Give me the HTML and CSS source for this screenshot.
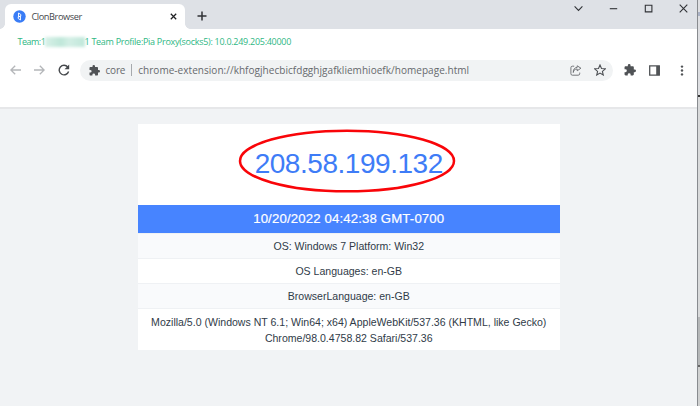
FILE: index.html
```html
<!DOCTYPE html>
<html lang="en">
<head>
<meta charset="utf-8">
<title>ClonBrowser</title>
<link rel="stylesheet" href="styles.css">
</head>
<body>
<div class="window">
  <header class="tabstrip">
    <div class="tab">
      <svg class="favicon" width="13" height="13" viewBox="0 0 13 13"><circle cx="6.5" cy="6.5" r="6.2" fill="#397cf6"/><path d="M5.5 3v3.800l2.300-.8M7.500 10V6.200l-2.300.8M5.500 3l2.300 1.500v1.700M7.500 10L5.200 8.500V6.800" fill="none" stroke="#fff" stroke-width=".9"/></svg>
      <span class="tab-title">ClonBrowser</span>
      <svg class="tab-close" width="7" height="7" viewBox="0 0 7 7"><path d="M.8.8l5.4 5.4M6.2.8L.8 6.2" stroke="#202124" stroke-width="1.25"/></svg>
    </div>
    <svg class="new-tab" width="10" height="10" viewBox="0 0 10 10"><path d="M5 .5v9M.5 5h9" stroke="#303236" stroke-width="1.5"/></svg>
    <div class="controls">
      <svg width="9" height="9" viewBox="0 0 9 9"><path d="M.6 2.4l3.9 4 3.9-4"/></svg>
      <svg width="9" height="9" viewBox="0 0 9 9"><path d="M.8 4.7h7.4"/></svg>
      <svg width="9" height="9" viewBox="0 0 9 9"><path d="M1.3 1.3h6.6v6.6H1.3z"/></svg>
      <svg width="9" height="9" viewBox="0 0 9 9"><path d="M.7.7l7.6 7.6M8.3.7L.7 8.3"/></svg>
    </div>
  </header>
  <div class="profile"><span class="p-team">Team:1</span><span class="redacted"></span><span class="p-info">1 Team Profile:Pia Proxy(socks5): 10.0.249.205:40000</span></div>
  <nav class="toolbar">
    <svg class="back" width="11" height="10" viewBox="0 0 11 10"><path d="M11 5H1M5.2.7L.9 5l4.3 4.3" fill="none" stroke="#b4b6b9" stroke-width="1.3"/></svg>
    <svg class="forward" width="11" height="10" viewBox="0 0 11 10"><path d="M0 5h10M5.8.7L10.1 5 5.8 9.3" fill="none" stroke="#b4b6b9" stroke-width="1.3"/></svg>
    <svg class="reload" width="12" height="12" viewBox="0 0 12 12"><path d="M9.8 3.1A4.8 4.8 0 1 0 10.6 7.5" fill="none" stroke="#45484c" stroke-width="1.4"/><path d="M11.2.6v4.7H6.5z" fill="#45484c"/></svg>
    <div class="omnibox">
      <svg class="puzzle" width="11" height="11" viewBox="1 1 22 22"><path d="M20.5 11H19V7c0-1.100-.9-2-2-2h-4V3.500a2.500 2.500 0 0 0-5 0V5H4c-1.100 0-2 .9-2 2v3.800h1.500a2.700 2.700 0 0 1 0 5.400H2V20c0 1.100.9 2 2 2h3.800v-1.500a2.700 2.700 0 0 1 5.400 0V22H17c1.100 0 2-.9 2-2v-4h1.500a2.500 2.500 0 0 0 0-5z" fill="#505356"/></svg>
      <span class="scheme">core</span>
      <span class="divider"></span>
      <span class="url">chrome-extension://khfogjhecbicfdgghjgafkliemhioefk/homepage.html</span>
      <svg class="share" width="12" height="11" viewBox="0 0 12 11"><path d="M4.200 1.200H2.300Q.900 1.200.900 2.700V8.700Q.900 10.200 2.300 10.200H8.200Q9.700 10.200 9.700 8.700V7.600M3.300 7.500C3.500 5.300 4.700 4 7.200 4V5.800L10.900 3.200 7.200.8V2.400C4.400 2.500 3.100 4.700 3.300 7.500z" fill="none" stroke="#66696d" stroke-width=".9" stroke-linejoin="round"/></svg>
      <svg class="star" width="12" height="12" viewBox="2 2 20 20"><path d="M12 3.600l2.500 5.900 6.400.5-4.900 4.200 1.500 6.200-5.500-3.300-5.500 3.300L8 14.200 3.100 10l6.400-.5z" fill="none" stroke="#4d5054" stroke-width="1.800"/></svg>
    </div>
    <svg class="extensions" width="12" height="12" viewBox="1 1 22 22"><path d="M20.500 11H19V7c0-1.100-.9-2-2-2h-4V3.500a2.500 2.500 0 0 0-5 0V5H4c-1.100 0-2 .9-2 2v3.800h1.500a2.700 2.700 0 0 1 0 5.400H2V20c0 1.100.9 2 2 2h3.800v-1.500a2.700 2.700 0 0 1 5.400 0V22H17c1.100 0 2-.9 2-2v-4h1.500a2.500 2.500 0 0 0 0-5z" fill="#505356"/></svg>
    <svg class="panel" width="11" height="11" viewBox="0 0 11 11"><path d="M.7.900h9.600v9.200H.7z" fill="none" stroke="#505356" stroke-width="1.300"/><path d="M7.200.900h3.100v9.200H7.200z" fill="#505356"/></svg>
    <svg class="more" width="4" height="11" viewBox="0 0 4 11"><g fill="#505356"><circle cx="2" cy="1.600" r="1.200"/><circle cx="2" cy="5.500" r="1.200"/><circle cx="2" cy="9.400" r="1.200"/></g></svg>
  </nav>
  <main class="page">
    <section class="card">
      <div class="ip"><span>208.58.199.132</span>
        <svg class="ring" width="218" height="64" viewBox="0 0 218 64"><ellipse cx="109" cy="32" rx="107" ry="30.300" fill="none" stroke="#f90509" stroke-width="2.500"/></svg>
      </div>
      <div class="date"><span>10/20/2022 04:42:38 GMT-0700</span></div>
      <div class="row alt"><span>OS: Windows 7 Platform: Win32</span></div>
      <div class="row"><span>OS Languages: en-GB</span></div>
      <div class="row alt"><span>BrowserLanguage: en-GB</span></div>
      <div class="row agent"><span>Mozilla/5.0 (Windows NT 6.1; Win64; x64) AppleWebKit/537.36 (KHTML, like Gecko)</span><span>Chrome/98.0.4758.82 Safari/537.36</span></div>
    </section>
  </main>
</div>
<aside class="edge"></aside>
</body>
</html>
```
FILE: styles.css
```css
* { box-sizing: border-box; }
body {
  margin: 0;
  width: 700px;
  height: 406px;
  display: flex;
  overflow: hidden;
  background: #fff;
  font-family: "Open Sans", "Noto Sans", sans-serif;
}
svg { display: block; flex: none; }
span { white-space: nowrap; }
.window { width: 697px; height: 406px; display: flex; flex-direction: column; }
.edge {
  width: 3px;
  border-left: 1px solid #888b8f;
  background: linear-gradient(#dedfe2 0 12px, #aab2c5 12px 16px, #dedfe2 16px 95px, #333 95px 97px, #d9dadb 97px 317px, #b5b7b8 317px 365px, #666 365px 367px, #d0d1d1 367px);
}
.tabstrip {
  height: 29px;
  display: flex;
  background: #dee1e6;
  padding-left: 5px;
}
.tab {
  position: relative;
  width: 180px;
  height: 25px;
  margin-top: 4px;
  padding: 0 8px 0 8px;
  display: flex;
  align-items: center;
  background: #fff;
  border-radius: 6px 6px 0 0;
}
.tab::before, .tab::after {
  content: "";
  position: absolute;
  bottom: 0;
  width: 5px;
  height: 5px;
}
.tab::before { left: -5px; background: radial-gradient(circle at 0 0, #dee1e6 4.5px, #fff 5px); }
.tab::after { right: -5px; background: radial-gradient(circle at 100% 0, #dee1e6 4.5px, #fff 5px); }
.tab-title { margin-left: 5.5px; font-size: 9.2px; letter-spacing: -0.42px; color: #45484c; }
.tab-close { margin-left: auto; }
.new-tab { margin: 11px 0 0 12px; }
.controls {
  margin: 4px 9px 0 auto;
  height: 9px;
  display: flex;
  gap: 26px;
}
.controls path { fill: none; stroke: #303236; stroke-width: 1.1; }
.profile {
  height: 26px;
  padding: 0 0 1px 17.5px;
  display: flex;
  align-items: center;
  font-size: 9px;
  letter-spacing: -0.28px;
  color: #2eb784;
}
.p-team { width: 27px; letter-spacing: -0.5px; }
.redacted {
  width: 40px;
  height: 10px;
  background: linear-gradient(90deg, #d8f1e8, #bfe7d9 40%, #d3efe5 60%, #c0e7da);
  filter: blur(1.5px);
}
.toolbar {
  height: 30px;
  display: flex;
  align-items: center;
  padding-left: 10px;
}
.forward { margin-left: 13px; }
.reload { margin-left: 13px; }
.omnibox {
  width: 533px;
  height: 21px;
  margin-left: 10px;
  padding-left: 9px;
  display: flex;
  align-items: center;
  border-radius: 11px;
  background: #f1f3f4;
  font-size: 10px;
  letter-spacing: 0.04px;
  color: #66696d;
}
.scheme { margin-left: 5.5px; letter-spacing: -0.2px; }
.divider { width: 1px; height: 12px; margin: 0 6px; background: #a6a9ad; }
.share { margin-left: auto; }
.star { margin: 0 7px 0 12px; }
.extensions { margin-left: 11px; }
.panel { margin-left: 13px; }
.more { margin-left: 20px; }
.page {
  height: 299px;
  margin-top: 22px;
  padding: 14.5px 0 0 138px;
  border-top: 2px solid #e6e7e9;
  background: #f1f3f5;
}
.card {
  width: 421.5px;
  background: #fff;
  font-family: "Liberation Sans", Arial, sans-serif;
  color: #303b48;
}
.ip {
  position: relative;
  height: 81px;
  display: flex;
  align-items: center;
  justify-content: center;
  font-size: 28px;
  letter-spacing: -0.46px;
  color: #3e7cf7;
}
.ring { position: absolute; left: 100px; top: 5.5px; }
.date {
  height: 28px;
  display: flex;
  align-items: center;
  justify-content: center;
  background: #4784ff;
  font-size: 13.2px;
  letter-spacing: 0.15px;
  -webkit-text-stroke: 0.2px #fff;
  color: #fff;
}
.row {
  height: 25.3px;
  display: flex;
  align-items: center;
  justify-content: center;
  border-top: 1px solid #eff1f4;
  font-size: 10.55px;
}
.alt { background: #f9fafc; }
.agent { height: 41.4px; padding-top: 1px; flex-direction: column; line-height: 16.5px; }
```
